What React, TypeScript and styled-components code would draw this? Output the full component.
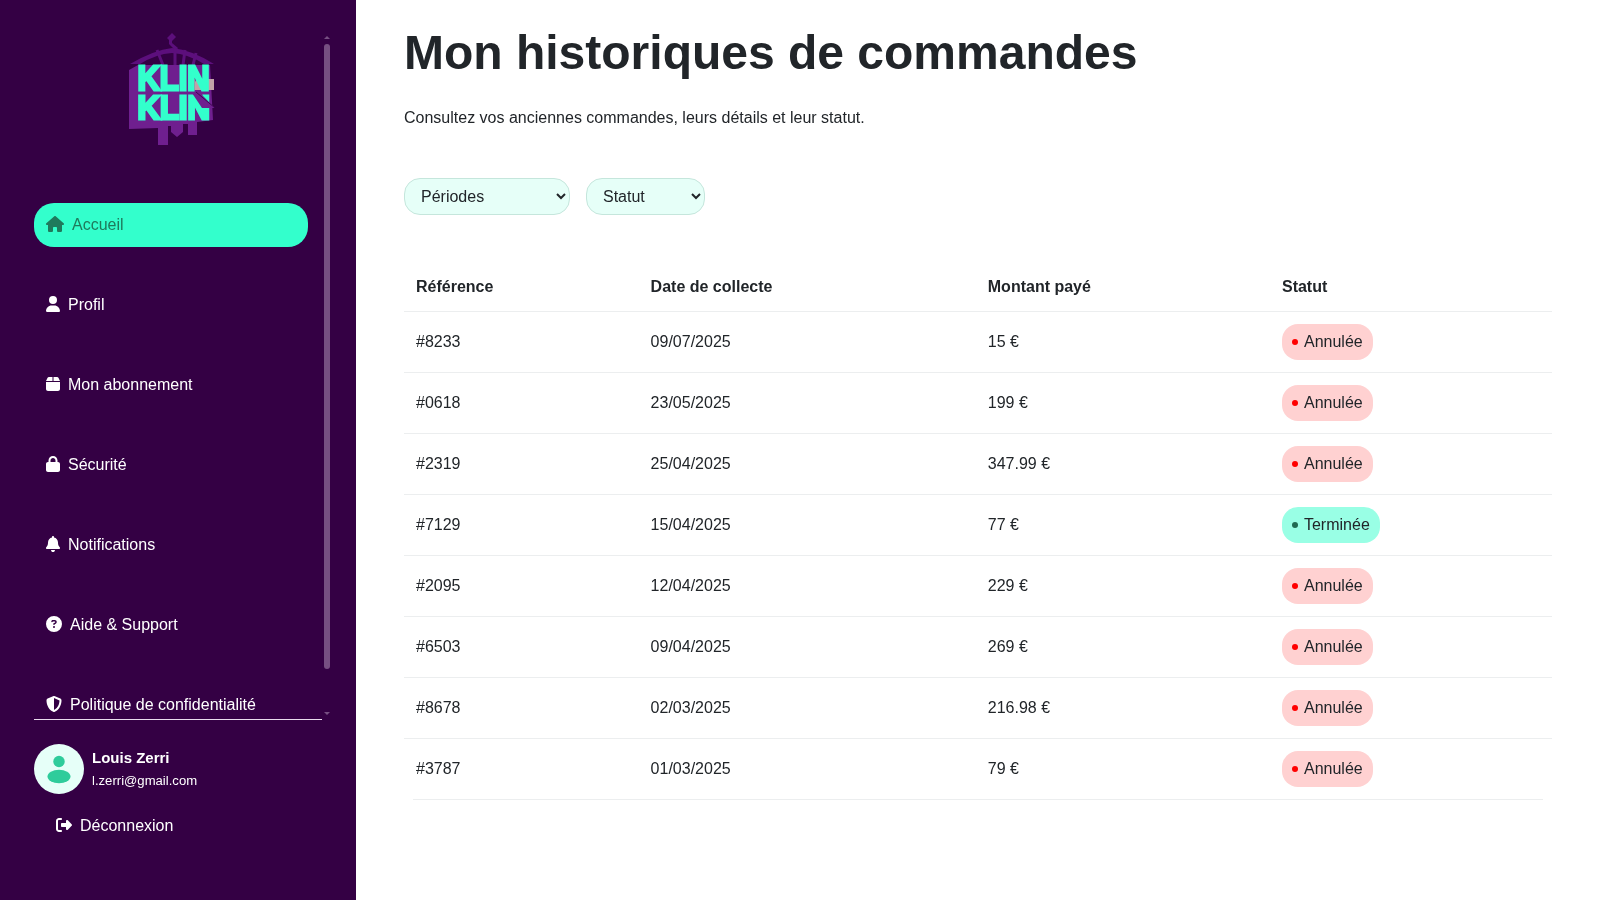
import React from "react";
import styled, { createGlobalStyle } from "styled-components";
import { FaHouse, FaUser, FaBox, FaLock, FaBell, FaCircleQuestion, FaShieldHalved, FaRightFromBracket } from "react-icons/fa6";

const Global = createGlobalStyle`
  html, body { margin: 0; padding: 0; height: 100%; background: #fff; }
  body { font-family: "Liberation Sans", Arial, sans-serif; font-size: 16px; color: #212529; line-height: 1.5; }
  * { box-sizing: border-box; }
`;

const Page = styled.div`
  display: flex;
  width: 1600px;
  height: 900px;
  overflow: hidden;
  will-change: transform;
`;
const Sidebar = styled.aside`
  position: relative;
  width: 356px;
  height: 900px;
  flex: none;
  background: #340044;
  color: #fff;
  padding: 32px 34px 0 34px;
  display: flex;
  flex-direction: column;
`;
const NavScroll = styled.div`
  height: 688px;
  flex: none;
  overflow: hidden;
`;
const NavInner = styled.div`
  display: flex;
  flex-direction: column;
  width: 274px;
`;
const Logo = styled.svg`
  display: block;
  width: 95px;
  height: 116px;
  margin: 0 0 55px 92px;
`;
const NavItem = styled.a<{ $active?: boolean; $icon: number }>`
  display: flex;
  align-items: center;
  height: 44px;
  margin-bottom: 36px;
  padding-left: 12px;
  gap: 8px;
  border-radius: 20px;
  background: ${(p) => (p.$active ? "#33ffcc" : "transparent")};
  color: ${(p) => (p.$active ? "#1f7a5c" : "#fff")};
  font-size: 16px;
  white-space: nowrap;
  & > svg { flex: none; width: ${(p) => p.$icon}px; height: 16px; margin-top: -2px; }
`;
const ScrollThumb = styled.div`
  position: absolute;
  left: 324px;
  top: 44px;
  width: 6px;
  height: 625px;
  border-radius: 3px;
  background: #764f82;
`;
const ScrollArrow = styled.div<{ $down?: boolean }>`
  position: absolute;
  left: 324px;
  top: ${(p) => (p.$down ? "712px" : "36px")};
  width: 6px;
  height: 3px;
  background: #764f82;
  clip-path: ${(p) => (p.$down ? "polygon(0 0, 100% 0, 50% 100%)" : "polygon(50% 0, 100% 100%, 0 100%)")};
`;
const Rule = styled.div`
  width: 288px;
  height: 1px;
  background: #e9dced;
  margin-top: -1px;
`;
const UserRow = styled.div`
  display: flex;
  align-items: center;
  gap: 8px;
  margin-top: 24px;
`;
const Avatar = styled.div`
  width: 50px;
  height: 50px;
  border-radius: 50%;
  background: #e6fff8;
  display: flex;
  align-items: center;
  justify-content: center;
`;
const UserText = styled.div`
  display: flex;
  flex-direction: column;
  gap: 3px;
`;
const UserName = styled.div`
  font-size: 15px;
  font-weight: 700;
  line-height: 20px;
`;
const UserMail = styled.div`
  font-size: 13.12px;
  line-height: 20px;
`;
const Logout = styled.a`
  display: flex;
  align-items: center;
  gap: 8px;
  margin: 20px 0 0 22px;
  height: 24px;
  font-size: 16px;
  color: #fff;
  & > svg { flex: none; width: 16px; height: 16px; margin-top: -2px; }
`;
const Main = styled.main`
  flex: 1;
  padding: 24px 48px 0 48px;
  background: #fff;
`;
const Title = styled.h1`
  margin: 0 0 24px;
  font-size: 48px;
  font-weight: 700;
  line-height: 1.2;
  color: #212529;
`;
const Lead = styled.p`
  margin: 0 0 48px;
  font-size: 16px;
  line-height: 24px;
`;
const Filters = styled.div`
  display: flex;
  gap: 16px;
  margin-bottom: 48px;
`;
const Select = styled.select<{ $w: number }>`
  width: ${(p) => p.$w}px;
  height: 37px;
  padding: 0 0 0 12px;
  border: 1px solid #c5e6dc;
  border-radius: 16px;
  background: #e6fff8;
  color: #212529;
  font-family: "Liberation Sans", Arial, sans-serif;
  font-size: 16px;
`;
const Table = styled.table`
  width: 1148px;
  border-collapse: collapse;
  table-layout: fixed;
  font-size: 16px;
`;
const Th = styled.th<{ $w: number }>`
  width: ${(p) => p.$w}px;
  height: 49px;
  padding: 0 12px;
  text-align: left;
  font-weight: 700;
  border-bottom: 1px solid #eceeef;
`;
const Td = styled.td`
  height: 61px;
  padding: 0 12px;
  border-bottom: 1px solid #eceeef;
  tr:last-child > & { border-bottom: 0; }
`;
const TableEnd = styled.div`
  width: 1130px;
  height: 1px;
  margin: -1px 0 0 9px;
  background: #eceeef;
`;
const Badge = styled.span<{ $done?: boolean }>`
  display: inline-flex;
  align-items: center;
  height: 36px;
  padding: 0 10px;
  gap: 6px;
  border-radius: 16px;
  background: ${(p) => (p.$done ? "#99ffe5" : "#ffd1d1")};
  color: #212529;
`;
const Dot = styled.i<{ $done?: boolean }>`
  width: 6px;
  height: 6px;
  border-radius: 50%;
  background: ${(p) => (p.$done ? "#1f6b52" : "#ff0000")};
`;

const rows: [string, string, string, boolean][] = [
  ["#8233", "09/07/2025", "15 €", false],
  ["#0618", "23/05/2025", "199 €", false],
  ["#2319", "25/04/2025", "347.99 €", false],
  ["#7129", "15/04/2025", "77 €", true],
  ["#2095", "12/04/2025", "229 €", false],
  ["#6503", "09/04/2025", "269 €", false],
  ["#8678", "02/03/2025", "216.98 €", false],
  ["#3787", "01/03/2025", "79 €", false],
];

const KlinLogo = () => (
  <Logo viewBox="0 0 95 116">
    <path d="M41 6L46 1L50 5L46 9L46 11L52 16L50 19L43 12L43 8Z" fill="#5c0f7c" />
    <path d="M4 32Q28 18 46 16Q66 18 88 32L78 32Q62 22 46 21Q30 22 14 32Z" fill="#5c0f7c" />
    <path d="M31 18L37 33M49 16V33M59 18L57 33M70 21L67 33" stroke="#5c0f7c" strokeWidth="3" fill="none" />
    <path d="M3 38L12 33L84 33L87 88L71 90L71 103L62 103L62 92L57 92L57 100L51 105L45 100L45 94L42 94L42 113L32 113L32 96L3 97Z" fill="#6f1f8f" />
    <rect x="70" y="47" width="18" height="11" fill="#c2a2a8" />
    <g fill="#33ffcc" fontFamily="'Liberation Sans', sans-serif" fontWeight="700" stroke="#33ffcc" strokeWidth="3">
      <text transform="translate(11.5 58) scale(.86 1)" fontSize="36">KLIN</text>
      <text transform="translate(11.5 87) scale(.94 1)" fontSize="33">KLIN</text>
    </g>
    <path d="M68.5 47L74 58L68.5 58Z" fill="#c2a2a8" />
    <path d="M66 61L74 61L89 76L76 76Z" fill="#6f1f8f" />
    <path d="M70 60L89 76" stroke="#340044" strokeWidth="0.8" />
  </Logo>
);

export default function App() {
  return (
    <Page>
      <Global />
      <Sidebar>
        <NavScroll>
          <NavInner>
            <KlinLogo />
            <NavItem $active $icon={18}><FaHouse />Accueil</NavItem>
            <NavItem $icon={14}><FaUser />Profil</NavItem>
            <NavItem $icon={14}><FaBox />Mon abonnement</NavItem>
            <NavItem $icon={14}><FaLock />Sécurité</NavItem>
            <NavItem $icon={14}><FaBell />Notifications</NavItem>
            <NavItem $icon={16}><FaCircleQuestion />Aide &amp; Support</NavItem>
            <NavItem $icon={16}><FaShieldHalved />Politique de confidentialité</NavItem>
          </NavInner>
        </NavScroll>
        <ScrollArrow />
        <ScrollThumb />
        <ScrollArrow $down />
        <Rule />
        <UserRow>
          <Avatar>
            <svg width="26" height="30" viewBox="0 0 26 30" fill="#2fcc9b">
              <circle cx="13" cy="7.5" r="5.7" />
              <ellipse cx="13" cy="22.5" rx="11.5" ry="6.7" />
            </svg>
          </Avatar>
          <UserText>
            <UserName>Louis Zerri</UserName>
            <UserMail>l.zerri@gmail.com</UserMail>
          </UserText>
        </UserRow>
        <Logout><FaRightFromBracket />Déconnexion</Logout>
      </Sidebar>
      <Main>
        <Title>Mon historiques de commandes</Title>
        <Lead>Consultez vos anciennes commandes, leurs détails et leur statut.</Lead>
        <Filters>
          <Select $w={166} defaultValue="p"><option value="p">Périodes</option></Select>
          <Select $w={119} defaultValue="s"><option value="s">Statut</option></Select>
        </Filters>
        <Table>
          <thead>
            <tr>
              <Th $w={234.6}>Référence</Th>
              <Th $w={337.2}>Date de collecte</Th>
              <Th $w={294.2}>Montant payé</Th>
              <Th $w={282}>Statut</Th>
            </tr>
          </thead>
          <tbody>
            {rows.map((r) => (
              <tr key={r[0]}>
                <Td>{r[0]}</Td>
                <Td>{r[1]}</Td>
                <Td>{r[2]}</Td>
                <Td>
                  <Badge $done={r[3]}><Dot $done={r[3]} />{r[3] ? "Terminée" : "Annulée"}</Badge>
                </Td>
              </tr>
            ))}
          </tbody>
        </Table>
        <TableEnd />
      </Main>
    </Page>
  );
}
